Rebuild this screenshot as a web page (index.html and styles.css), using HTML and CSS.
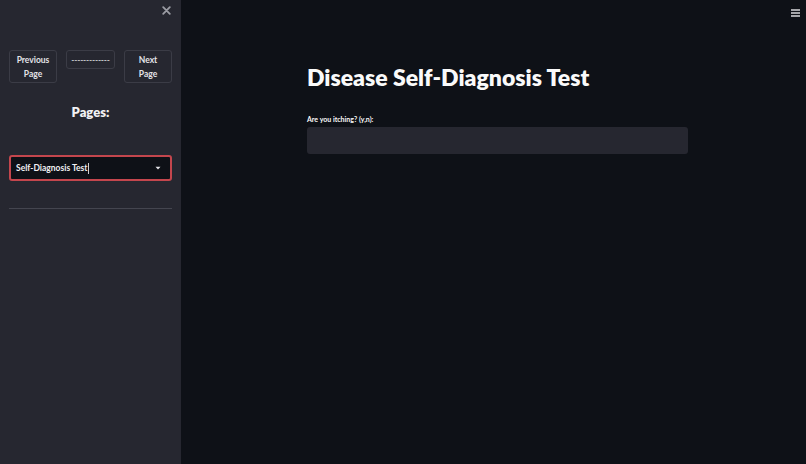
FILE: index.html
```html
<!DOCTYPE html>
<html>
<head>
<meta charset="utf-8">
<link rel="stylesheet" href="styles.css">
</head>
<body>
<div class="app">
  <aside class="sidebar">
    <div class="side-top">
      <svg class="close" width="9" height="9" viewBox="0 0 9 9"><path d="M1.2 1.2L7.8 7.8M7.8 1.2L1.2 7.8" stroke="#9b9ca4" stroke-width="1.8" stroke-linecap="round"/></svg>
    </div>
    <div class="nav">
      <button class="btn">Previous<br>Page</button>
      <button class="btn btn-mid">-------------</button>
      <button class="btn">Next<br>Page</button>
    </div>
    <div class="pages-title">Pages:</div>
    <div class="select">
      <span class="select-text">Self-Diagnosis Test</span><span class="cursor"></span>
      <svg class="arrow" width="6" height="4" viewBox="0 0 6 4"><path d="M0.5 0.8H5.5L3 3.5Z" fill="#e6e6ea"/></svg>
    </div>
    <hr class="divider">
  </aside>
  <main class="main">
    <div class="topbar">
      <svg class="menu" width="9" height="8" viewBox="0 0 9 8"><path d="M0 1H9M0 4H9M0 7H9" stroke="#d8d8dc" stroke-width="1.4"/></svg>
    </div>
    <div class="content">
      <h1 class="title">Disease Self-Diagnosis Test</h1>
      <label class="label">Are you itching? (y,n):</label>
      <div class="input"></div>
    </div>
  </main>
</div>
</body>
</html>
```
FILE: styles.css
```css
* { box-sizing: border-box; }
html, body { margin: 0; padding: 0; height: 100%; }
body {
  background: #0e1117;
  font-family: "Lato", "Open Sans", sans-serif;
  color: #fafafa;
}
.app { display: flex; height: 464px; }
.sidebar {
  width: 181px;
  flex: none;
  background: #262730;
  padding: 0 9px;
  display: flex;
  flex-direction: column;
}
.side-top {
  height: 50px;
  display: flex;
  justify-content: flex-end;
  padding-top: 6px;
  padding-right: 1px;
}
.close { display: block; }
.nav {
  display: flex;
  justify-content: space-between;
  align-items: flex-start;
}
.btn {
  width: 48px;
  height: 33px;
  background: #262730;
  border: 1px solid #3b3c46;
  border-radius: 3px;
  color: #e4e4e8;
  font-family: inherit;
  font-size: 8.5px;
  font-weight: 700;
  line-height: 14px;
  padding: 0;
}
.btn-mid {
  width: 49px;
  height: 19px;
  line-height: 12px;
  letter-spacing: -0.2px;
  font-weight: 400;
}
.pages-title {
  text-align: center;
  font-weight: 800;
  font-size: 13px;
  margin-top: 21px;
  color: #f2f2f4;
}
.select {
  margin-top: 35px;
  height: 26px;
  border: 2px solid #c4464d;
  border-radius: 3px;
  background: #0e1117;
  display: flex;
  align-items: center;
  padding: 0 9px 0 5px;
  font-size: 8.5px;
  font-weight: 700;
  color: #f0f0f2;
}
.cursor {
  width: 1px;
  height: 11px;
  background: #d0d0d4;
  margin-left: 1px;
}
.arrow { margin-left: auto; }
.divider {
  margin: 27px 0 0;
  border: 0;
  border-top: 1px solid #44454f;
}
.main {
  flex: 1;
  display: flex;
  flex-direction: column;
}
.topbar {
  height: 50px;
  display: flex;
  justify-content: flex-end;
  padding: 9px 6px 0 0;
}
.menu { display: block; }
.content {
  width: 381px;
  margin-left: 126px;
  margin-top: 11px;
}
.title {
  margin: 0;
  font-size: 23px;
  font-weight: 800;
  line-height: 32px;
  color: #fafafa;
}
.label {
  display: block;
  margin-top: 22px;
  font-size: 7px;
  font-weight: 700;
  color: #fafafa;
}
.input {
  margin-top: 4px;
  height: 27px;
  background: #262730;
  border-radius: 3px;
}
```
